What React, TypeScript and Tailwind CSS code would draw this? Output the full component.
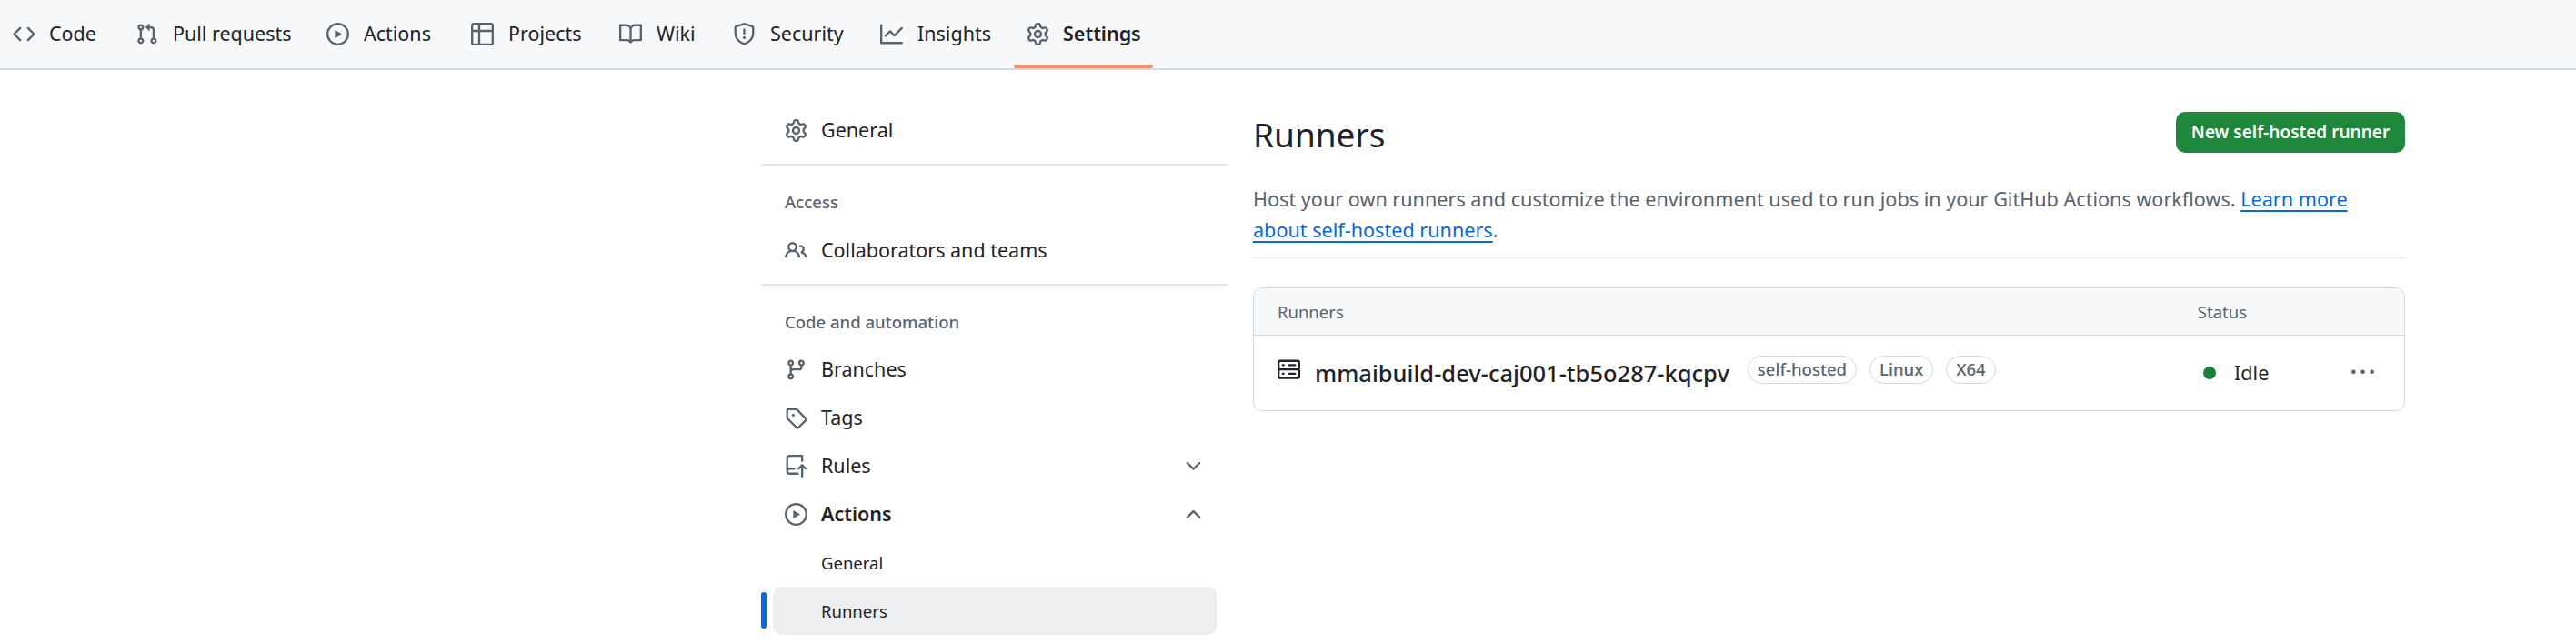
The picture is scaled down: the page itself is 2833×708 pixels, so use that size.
import type { ReactNode } from "react";

// octicons, 16px grid
const paths = {
  code: "m11.28 3.22 4.25 4.25a.75.75 0 0 1 0 1.06l-4.25 4.25a.749.749 0 0 1-1.275-.326.749.749 0 0 1 .215-.734L13.94 8l-3.72-3.72a.749.749 0 0 1 .326-1.275.749.749 0 0 1 .734.215Zm-6.56 0a.751.751 0 0 1 1.042.018.751.751 0 0 1 .018 1.042L2.06 8l3.72 3.72a.749.749 0 0 1-.326 1.275.749.749 0 0 1-.734-.215L.47 8.53a.75.75 0 0 1 0-1.06Z",
  pull: "M1.5 3.25a2.25 2.25 0 1 1 3 2.122v5.256a2.251 2.251 0 1 1-1.5 0V5.372A2.25 2.25 0 0 1 1.5 3.25Zm5.677-.177L9.573.677A.25.25 0 0 1 10 .854V2.5h1A2.5 2.5 0 0 1 13.5 5v5.628a2.251 2.251 0 1 1-1.5 0V5a1 1 0 0 0-1-1h-1v1.646a.25.25 0 0 1-.427.177L7.177 3.427a.25.25 0 0 1 0-.354ZM3.75 2.5a.75.75 0 1 0 0 1.5.75.75 0 0 0 0-1.5Zm0 9.5a.75.75 0 1 0 0 1.5.75.75 0 0 0 0-1.5Zm8.25.75a.75.75 0 1 0 1.5 0 .75.75 0 0 0-1.5 0Z",
  play: "M8 0a8 8 0 1 1 0 16A8 8 0 0 1 8 0ZM1.5 8a6.5 6.5 0 1 0 13 0 6.5 6.5 0 0 0-13 0Zm4.879-2.773 4.264 2.559a.25.25 0 0 1 0 .428l-4.264 2.559A.25.25 0 0 1 6 10.559V5.442a.25.25 0 0 1 .379-.215Z",
  table: "M0 1.75C0 .784.784 0 1.75 0h12.5C15.216 0 16 .784 16 1.75v12.5A1.75 1.75 0 0 1 14.25 16H1.75A1.75 1.75 0 0 1 0 14.25ZM6.5 6.5v8h7.75a.25.25 0 0 0 .25-.25V6.5Zm8-1.5V1.75a.25.25 0 0 0-.25-.25H6.5V5Zm-13 1.5v7.75c0 .138.112.25.25.25H5v-8ZM5 5V1.5H1.75a.25.25 0 0 0-.25.25V5Z",
  book: "M0 1.75A.75.75 0 0 1 .75 1h4.253c1.227 0 2.317.59 3 1.501A3.743 3.743 0 0 1 11.006 1h4.245a.75.75 0 0 1 .75.75v10.5a.75.75 0 0 1-.75.75h-4.507a2.25 2.25 0 0 0-1.591.659l-.622.621a.75.75 0 0 1-1.06 0l-.622-.621A2.25 2.25 0 0 0 5.258 13H.75a.75.75 0 0 1-.75-.75Zm7.251 10.324.004-5.073-.002-2.253A2.25 2.25 0 0 0 5.003 2.5H1.5v9h3.757a3.75 3.75 0 0 1 1.994.574ZM8.755 4.75l-.004 7.322a3.752 3.752 0 0 1 1.992-.572H14.5v-9h-3.495a2.25 2.25 0 0 0-2.25 2.25Z",
  shield: "M7.467.133a1.748 1.748 0 0 1 1.066 0l5.25 1.68A1.75 1.75 0 0 1 15 3.48V7c0 1.566-.32 3.182-1.303 4.682-.983 1.498-2.585 2.813-5.032 3.855a1.697 1.697 0 0 1-1.33 0c-2.447-1.042-4.049-2.357-5.032-3.855C1.32 10.182 1 8.566 1 7V3.48a1.75 1.75 0 0 1 1.217-1.667Zm.61 1.429a.25.25 0 0 0-.153 0l-5.25 1.68a.25.25 0 0 0-.174.238V7c0 1.358.275 2.666 1.057 3.86.784 1.194 2.121 2.34 4.366 3.297a.196.196 0 0 0 .154 0c2.245-.956 3.582-2.104 4.366-3.298C13.225 9.666 13.5 8.36 13.5 7V3.48a.251.251 0 0 0-.174-.237l-5.25-1.68ZM8.75 4.75v3a.75.75 0 0 1-1.5 0v-3a.75.75 0 0 1 1.5 0ZM9 10.5a1 1 0 1 1-2 0 1 1 0 0 1 2 0Z",
  graph: "M1.5 1.75V13.5h13.75a.75.75 0 0 1 0 1.5H.75a.75.75 0 0 1-.75-.75V1.75a.75.75 0 0 1 1.5 0Zm14.28 2.53-5.25 5.25a.75.75 0 0 1-1.06 0L7 7.06 4.28 9.78a.751.751 0 0 1-1.042-.018.751.751 0 0 1-.018-1.042l3.25-3.25a.75.75 0 0 1 1.06 0L10 7.94l4.72-4.72a.751.751 0 0 1 1.042.018.751.751 0 0 1 .018 1.042Z",
  gear: "M8 0a8.2 8.2 0 0 1 .701.031C9.444.095 9.99.645 10.16 1.29l.288 1.107c.018.066.079.158.212.224.231.114.454.243.668.386.123.082.233.09.299.071l1.103-.303c.644-.176 1.392.021 1.82.63.27.385.506.792.704 1.218.315.675.111 1.422-.364 1.891l-.814.806c-.049.048-.098.147-.088.294.016.257.016.515 0 .772-.01.147.038.246.088.294l.814.806c.475.469.679 1.216.364 1.891a7.977 7.977 0 0 1-.704 1.217c-.428.61-1.176.807-1.82.63l-1.102-.302c-.067-.019-.177-.011-.3.071a5.909 5.909 0 0 1-.668.386c-.133.066-.194.158-.211.224l-.29 1.106c-.168.646-.715 1.196-1.458 1.26a8.006 8.006 0 0 1-1.402 0c-.743-.064-1.289-.614-1.458-1.26l-.289-1.106c-.018-.066-.079-.158-.212-.224a5.738 5.738 0 0 1-.668-.386c-.123-.082-.233-.09-.299-.071l-1.103.303c-.644.176-1.392-.021-1.82-.63a8.12 8.12 0 0 1-.704-1.218c-.315-.675-.111-1.422.363-1.891l.815-.806c.05-.048.098-.147.088-.294a6.214 6.214 0 0 1 0-.772c.01-.147-.038-.246-.088-.294l-.815-.806C.635 6.045.431 5.298.746 4.623a7.92 7.92 0 0 1 .704-1.217c.428-.61 1.176-.807 1.82-.63l1.102.302c.067.019.177.011.3-.071.214-.143.437-.272.668-.386.133-.066.194-.158.211-.224l.29-1.106C6.009.645 6.556.095 7.299.03 7.53.01 7.764 0 8 0Zm-.571 1.525c-.036.003-.108.036-.137.146l-.289 1.105c-.147.561-.549.967-.998 1.189-.173.086-.34.183-.5.29-.417.278-.97.423-1.529.27l-1.103-.303c-.109-.03-.175.016-.195.045-.22.312-.412.644-.573.99-.014.031-.021.11.059.19l.815.806c.411.406.562.957.53 1.456a4.709 4.709 0 0 0 0 .582c.032.499-.119 1.05-.53 1.456l-.815.806c-.081.08-.073.159-.059.19.162.346.353.677.573.989.02.03.085.076.195.046l1.102-.303c.56-.153 1.113-.008 1.53.27.161.107.328.204.501.29.447.222.85.629.997 1.189l.289 1.105c.029.109.101.143.137.146a6.6 6.6 0 0 0 1.142 0c.036-.003.108-.036.137-.146l.289-1.105c.147-.561.549-.967.998-1.189.173-.086.34-.183.5-.29.417-.278.97-.423 1.529-.27l1.103.303c.109.029.175-.016.195-.045.22-.313.411-.644.573-.99.014-.031.021-.11-.059-.19l-.815-.806c-.411-.406-.562-.957-.53-1.456a4.709 4.709 0 0 0 0-.582c-.032-.499.119-1.05.53-1.456l.815-.806c.081-.08.073-.159.059-.19a6.464 6.464 0 0 0-.573-.989c-.02-.03-.085-.076-.195-.046l-1.102.303c-.56.153-1.113.008-1.53-.27a4.44 4.44 0 0 0-.501-.29c-.447-.222-.85-.629-.997-1.189l-.289-1.105c-.029-.11-.101-.143-.137-.146a6.6 6.6 0 0 0-1.142 0ZM11 8a3 3 0 1 1-6 0 3 3 0 0 1 6 0ZM9.5 8a1.5 1.5 0 1 0-3.001.001A1.5 1.5 0 0 0 9.5 8Z",
  people: "M2 5.5a3.5 3.5 0 1 1 5.898 2.549 5.508 5.508 0 0 1 3.034 4.084.75.75 0 1 1-1.482.235 4 4 0 0 0-7.9 0 .75.75 0 0 1-1.482-.236A5.507 5.507 0 0 1 3.102 8.05 3.493 3.493 0 0 1 2 5.5ZM11 4a3.001 3.001 0 0 1 2.22 5.018 5.01 5.01 0 0 1 2.56 3.012.749.749 0 0 1-.885.954.752.752 0 0 1-.549-.514 3.507 3.507 0 0 0-2.522-2.372.75.75 0 0 1-.574-.73v-.352a.75.75 0 0 1 .416-.672A1.5 1.5 0 0 0 11 5.5.75.75 0 0 1 11 4Zm-5.5-.5a2 2 0 1 0-.001 3.999A2 2 0 0 0 5.5 3.5Z",
  branch: "M9.5 3.25a2.25 2.25 0 1 1 3 2.122V6A2.5 2.5 0 0 1 10 8.5H6a1 1 0 0 0-1 1v1.128a2.251 2.251 0 1 1-1.5 0V5.372a2.25 2.25 0 1 1 1.5 0v1.836A2.493 2.493 0 0 1 6 7h4a1 1 0 0 0 1-1v-.628A2.25 2.25 0 0 1 9.5 3.25Zm-6 0a.75.75 0 1 0 1.5 0 .75.75 0 0 0-1.5 0Zm8.25-.75a.75.75 0 1 0 0 1.5.75.75 0 0 0 0-1.5ZM4.25 12a.75.75 0 1 0 0 1.5.75.75 0 0 0 0-1.5Z",
  tag: "M1 7.775V2.75C1 1.784 1.784 1 2.75 1h5.025c.464 0 .91.184 1.238.513l6.25 6.25a1.75 1.75 0 0 1 0 2.474l-5.026 5.026a1.75 1.75 0 0 1-2.474 0l-6.25-6.25A1.752 1.752 0 0 1 1 7.775Zm1.5 0c0 .066.026.13.073.177l6.25 6.25a.25.25 0 0 0 .354 0l5.025-5.025a.25.25 0 0 0 0-.354l-6.25-6.25a.25.25 0 0 0-.177-.073H2.75a.25.25 0 0 0-.25.25ZM6 5a1 1 0 1 1 0 2 1 1 0 0 1 0-2Z",
  rules: "M1 2.5A2.5 2.5 0 0 1 3.5 0h8.75a.75.75 0 0 1 .75.75v3.5a.75.75 0 0 1-1.5 0V1.5h-8a1 1 0 0 0-1 1v6.708A2.493 2.493 0 0 1 3.5 9h3.25a.75.75 0 0 1 0 1.5H3.5a1 1 0 0 0 0 2h5.75a.75.75 0 0 1 0 1.5H3.5A2.5 2.5 0 0 1 1 11.5Zm13.23 7.79h-.001l-1.224-1.224v6.184a.75.75 0 0 1-1.5 0V9.066L10.28 10.29a.75.75 0 0 1-1.06-1.061l2.505-2.504a.75.75 0 0 1 1.06 0L15.29 9.23a.751.751 0 0 1-.018 1.042.751.751 0 0 1-1.042.018Z",
  chevronDown: "M12.78 5.22a.749.749 0 0 1 0 1.06l-4.25 4.25a.749.749 0 0 1-1.06 0L3.22 6.28a.749.749 0 1 1 1.06-1.06L8 8.939l3.72-3.719a.749.749 0 0 1 1.06 0Z",
  chevronUp: "M3.22 10.53a.749.749 0 0 1 0-1.06l4.25-4.25a.749.749 0 0 1 1.06 0l4.25 4.25a.749.749 0 1 1-1.06 1.06L8 6.811 4.28 10.53a.749.749 0 0 1-1.06 0Z",
  server: "M1.75 1h12.5c.966 0 1.75.784 1.75 1.75v4c0 .372-.116.717-.314 1 .198.283.314.628.314 1v4a1.75 1.75 0 0 1-1.75 1.75H1.75A1.75 1.75 0 0 1 0 13.75v-4c0-.372.116-.717.314-1a1.739 1.739 0 0 1-.314-1v-4C0 1.784.784 1 1.75 1ZM1.5 2.75v4c0 .138.112.25.25.25h12.5a.25.25 0 0 0 .25-.25v-4a.25.25 0 0 0-.25-.25H1.75a.25.25 0 0 0-.25.25Zm.25 5.75a.25.25 0 0 0-.25.25v4c0 .138.112.25.25.25h12.5a.25.25 0 0 0 .25-.25v-4a.25.25 0 0 0-.25-.25ZM7 4.75A.75.75 0 0 1 7.75 4h4.5a.75.75 0 0 1 0 1.5h-4.5A.75.75 0 0 1 7 4.75ZM7.75 10h4.5a.75.75 0 0 1 0 1.5h-4.5a.75.75 0 0 1 0-1.5ZM3 4.75A.75.75 0 0 1 3.75 4h.5a.75.75 0 0 1 0 1.5h-.5A.75.75 0 0 1 3 4.75ZM3.75 10h.5a.75.75 0 0 1 0 1.5h-.5a.75.75 0 0 1 0-1.5Z",
  kebab: "M8 9a1.5 1.5 0 1 0 0-3 1.5 1.5 0 0 0 0 3ZM1.5 9a1.5 1.5 0 1 0 0-3 1.5 1.5 0 0 0 0 3Zm13 0a1.5 1.5 0 1 0 0-3 1.5 1.5 0 0 0 0 3Z",
};

function Octicon({ name, className }: { name: keyof typeof paths; className?: string }) {
  return (
    <svg viewBox="0 0 16 16" width={25} height={25} fill="currentColor" className={className ?? "shrink-0 text-[#59636e]"}>
      <path d={paths[name]} />
    </svg>
  );
}

const tabs = [
  { label: "Code", icon: "code", width: "w-[53px]" },
  { label: "Pull requests", icon: "pull", width: "w-[127px]" },
  { label: "Actions", icon: "play", width: "w-[76px]" },
  { label: "Projects", icon: "table", width: "w-[80px]" },
  { label: "Wiki", icon: "book", width: "w-[42px]" },
  { label: "Security", icon: "shield", width: "w-[79px]" },
  { label: "Insights", icon: "graph", width: "w-[78px]" },
] as const;

function RepoTabs() {
  return (
    <header className="flex h-[77px] items-center border-b-2 border-[#d1d9e0] bg-[#f6f8fa] pl-[14px] text-[21.5px] text-[#1f2328]">
      {tabs.map((tab, i) => (
        <a key={tab.label} className={i === 0 ? "mr-[42px] flex items-center gap-[15px] whitespace-nowrap" : "mr-[42px] flex items-center gap-[16px] whitespace-nowrap"}>
          <Octicon name={tab.icon} />
          <span className={tab.width}>{tab.label}</span>
        </a>
      ))}
      <a className="relative flex items-center gap-[15px] whitespace-nowrap font-semibold">
        <Octicon name="gear" />
        <span className="w-[83px]">Settings</span>
        <span className="absolute top-[50px] -right-[16px] -left-[14px] h-[4px] rounded-[3px] bg-[#fd8c73]" />
      </a>
    </header>
  );
}

function SideItem({
  icon,
  trailing,
  bold,
  children,
}: {
  icon: keyof typeof paths;
  trailing?: keyof typeof paths;
  bold?: boolean;
  children: ReactNode;
}) {
  return (
    <a className="mx-[13px] flex h-[53px] items-center gap-[15px] pl-[13px] text-[21.5px] text-[#1f2328]">
      <Octicon name={icon} />
      <span className={bold ? "flex-1 font-semibold" : "flex-1"}>{children}</span>
      {trailing && (
        <span className="pr-[13px]">
          <Octicon name={trailing} />
        </span>
      )}
    </a>
  );
}

function SideLabel({ children }: { children: ReactNode }) {
  return <div className="flex h-[30px] items-center pl-[26px] text-[18.5px] font-medium text-[#59636e]">{children}</div>;
}

function Sidebar() {
  return (
    <aside className="ml-[837px] w-[514px] shrink-0 pt-[40px]">
      <SideItem icon="gear">General</SideItem>
      <div className="mt-[10px] h-[2px] bg-[#e1e4e8]" />
      <div className="mt-[25px]">
        <SideLabel>Access</SideLabel>
      </div>
      <div className="mt-[12px]">
        <SideItem icon="people">Collaborators and teams</SideItem>
      </div>
      <div className="mt-[10px] h-[2px] bg-[#e1e4e8]" />
      <div className="mt-[25px]">
        <SideLabel>Code and automation</SideLabel>
      </div>
      <div className="mt-[11px]">
        <SideItem icon="branch">Branches</SideItem>
        <SideItem icon="tag">Tags</SideItem>
        <SideItem icon="rules" trailing="chevronDown">
          Rules
        </SideItem>
        <SideItem icon="play" trailing="chevronUp" bold>
          Actions
        </SideItem>
        <a className="mx-[13px] flex h-[53px] items-center pl-[53px] text-[18.5px] text-[#1f2328]">General</a>
        <a className="relative mx-[13px] flex h-[53px] items-center rounded-[10px] bg-[#eceef0] pl-[53px] text-[18.5px] text-[#1f2328]">
          Runners
          <span className="absolute top-[6px] -left-[13px] h-[40px] w-[6px] rounded-[3px] bg-[#0969da]" />
        </a>
      </div>
    </aside>
  );
}

function Pill({ children }: { children: ReactNode }) {
  return (
    <span className="flex h-[31px] items-center rounded-full border border-[#d1d9e0] px-[10px] text-[18.5px] font-medium text-[#59636e]">
      {children}
    </span>
  );
}

function RunnersPanel() {
  return (
    <main className="ml-[27px] w-[1267px] pt-[46px]">
      <div className="flex h-[50px] items-start justify-between">
        <h1 className="text-[37px] leading-[50px] font-normal text-[#1f2328]">Runners</h1>
        <button className="flex h-[45px] w-[252px] items-center justify-center rounded-[10px] bg-[#1f883d] text-[19px] font-semibold text-white">
          New self-hosted runner
        </button>
      </div>
      <p className="mt-[29px] border-b border-[#e1e4e8] pb-[13px] text-[21.6px] leading-[34px] text-[#59636e]">
        Host your own runners and customize the environment used to run jobs in your GitHub Actions workflows.{" "}
        <a className="text-[#0969da] underline decoration-2 underline-offset-[4px]">
          Learn more about self-hosted runners
        </a>
        .
      </p>
      <section className="mt-[32px] h-[136px] rounded-[10px] border border-[#d1d9e0]">
        <div className="flex h-[52px] items-center justify-between rounded-t-[10px] border-b border-[#d1d9e0] bg-[#f6f8fa] pr-[173px] pl-[26px] text-[18.5px] text-[#59636e]">
          <span>Runners</span>
          <span>Status</span>
        </div>
        <div className="flex h-[82px] items-center pr-[33px] pl-[26px]">
          <Octicon name="server" className="shrink-0 -translate-y-[4px] text-[#1f2328]" />
          <span className="ml-[16px] text-[25.5px] font-medium text-[#1f2328]">mmaibuild-dev-caj001-tb5o287-kqcpv</span>
          <div className="ml-[20px] flex -translate-y-[4px] gap-[14px]">
            <Pill>self-hosted</Pill>
            <Pill>Linux</Pill>
            <Pill>X64</Pill>
          </div>
          <div className="ml-auto flex items-center">
            <span className="h-[14px] w-[14px] rounded-full bg-[#1a7f37]" />
            <span className="ml-[20px] w-[129px] text-[21.6px] text-[#1f2328]">Idle</span>
            <Octicon name="kebab" />
          </div>
        </div>
      </section>
    </main>
  );
}

export default function App() {
  return (
    <div className="h-[708px] overflow-hidden bg-white font-['Noto_Sans',sans-serif]">
      <RepoTabs />
      <div className="flex">
        <Sidebar />
        <RunnersPanel />
      </div>
    </div>
  );
}
